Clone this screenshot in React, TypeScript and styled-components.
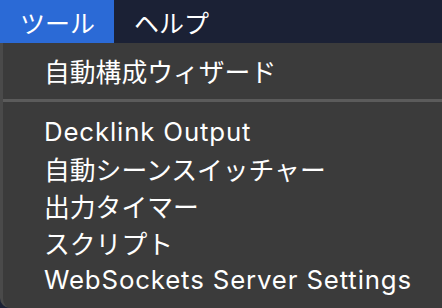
import React from "react";
import styled, { createGlobalStyle } from "styled-components";

const GlobalStyle = createGlobalStyle`
  html, body {
    margin: 0;
    padding: 0;
    background: #3b3b3b;
    overflow: hidden;
  }
  body {
    font-family: Inter, "Noto Sans CJK JP", sans-serif;
  }
`;

const Screen = styled.div`
  width: 442px;
  height: 308px;
  display: flex;
  flex-direction: column;
  background: #1b2135;
`;

const Menubar = styled.div`
  height: 43px;
  display: flex;
  align-items: stretch;
  background: #1b2135;
  flex-shrink: 0;
`;

const MenuTitle = styled.div<{ active?: boolean }>`
  display: flex;
  align-items: center;
  padding: 0 19px 0 20px;
  font-size: 25px;
  color: #fff;
  background: ${({ active }) => (active ? "#2b6ad6" : "transparent")};
`;

const Dropdown = styled.div`
  flex: 1;
  background: #3b3b3b;
  border-left: 3px solid #4a4a4a;
  border-bottom-left-radius: 10px;
  padding: 9px 0 0;
  display: flex;
  flex-direction: column;
`;

const Item = styled.div<{ latin?: boolean }>`
  height: 37px;
  display: flex;
  align-items: center;
  padding-left: 41px;
  font-size: 25.8px;
  letter-spacing: ${({ latin }) => (latin ? "0.85px" : "0")};
  color: #fff;
  white-space: nowrap;
`;

const Separator = styled.div`
  height: 3px;
  background: #5b5b5b;
  margin: 10px 0 11px;
`;

export default function App() {
  return (
    <>
      <GlobalStyle />
      <Screen>
        <Menubar>
          <MenuTitle active>ツール</MenuTitle>
          <MenuTitle>ヘルプ</MenuTitle>
        </Menubar>
        <Dropdown>
          <Item>自動構成ウィザード</Item>
          <Separator />
          <Item latin>Decklink Output</Item>
          <Item>自動シーンスイッチャー</Item>
          <Item>出力タイマー</Item>
          <Item>スクリプト</Item>
          <Item latin>WebSockets Server Settings</Item>
        </Dropdown>
      </Screen>
    </>
  );
}
